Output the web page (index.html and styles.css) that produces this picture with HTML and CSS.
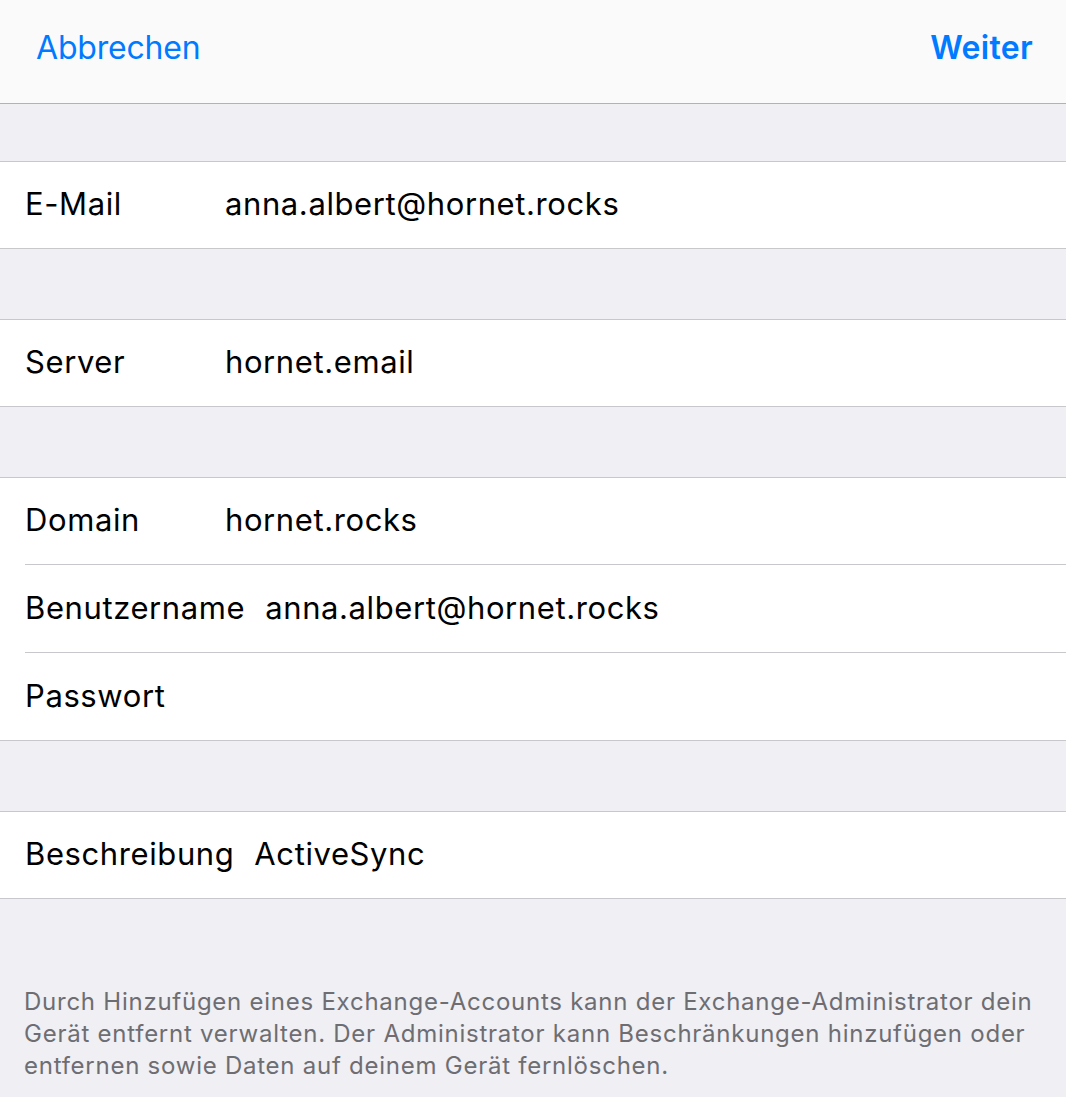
FILE: index.html
```html
<!DOCTYPE html>
<html>
<head>
  <title>Exchange</title>
  <link rel="stylesheet" href="styles.css">
</head>
<body>
  <!-- Navigation Bar -->
  <div class="nav-bar">
    <span class="nav-btn">Abbrechen</span>
    <span class="nav-btn done">Weiter</span>
  </div>

  <div class="group first">
    <div class="row">
      <span class="label">E-Mail</span>
      <span class="value">anna.albert@hornet.rocks</span>
    </div>
  </div>

  <div class="group">
    <div class="row">
      <span class="label">Server</span>
      <span class="value">hornet.email</span>
    </div>
  </div>

  <div class="group">
    <div class="row">
      <span class="label">Domain</span>
      <span class="value">hornet.rocks</span>
    </div>
    <div class="row">
      <span class="label">Benutzername</span>
      <span class="value">anna.albert@hornet.rocks</span>
    </div>
    <div class="row">
      <span class="label">Passwort</span>
      <span class="value"></span>
    </div>
  </div>

  <div class="group">
    <div class="row">
      <span class="label">Beschreibung</span>
      <span class="value">ActiveSync</span>
    </div>
  </div>

  <p class="footer-note">Durch Hinzufügen eines Exchange-Accounts kann der Exchange-Administrator dein Gerät entfernt verwalten. Der Administrator kann Beschränkungen hinzufügen oder entfernen sowie Daten auf deinem Gerät fernlöschen.</p>
</body>
</html>
```

FILE: styles.css
```css
body {
  background: #efeff4;
  font-family: Inter, 'Liberation Sans', sans-serif;
  margin: 0;
  padding: 0;
  color: #000;
}

/* Navigation Bar */
.nav-bar {
  background: #fafafa;
  height: 104px;
  border-bottom: 1px solid #b2b2b2;
  display: flex;
  align-items: center;
  justify-content: space-between;
  padding: 0 33px 8px 36px;
  box-sizing: border-box;
}

.nav-btn {
  color: #007aff;
  font-size: 32px;
  letter-spacing: -0.2px;
}

.nav-btn.done {
  font-weight: 600;
  letter-spacing: 0.3px;
}

/* Groups */
.group {
  background: #fff;
  margin-top: 70px;
  border-top: 1px solid #c8c7cc;
  border-bottom: 1px solid #c8c7cc;
  padding-left: 25px;
}

.group.first {
  margin-top: 57px;
}

.row {
  height: 86px;
  display: flex;
  align-items: center;
  padding-bottom: 3px;
  box-sizing: border-box;
  font-size: 31px;
  letter-spacing: 0.6px;
}

.row + .row {
  height: 88px;
  border-top: 1px solid #c8c7cc;
}

.label {
  min-width: 180px;
  margin-right: 20px;
}

/* Footer */
.footer-note {
  margin: 87px 0 0 0;
  padding: 0 24px;
  color: #6d6d72;
  font-size: 24px;
  line-height: 32px;
  letter-spacing: 0.75px;
}
```
